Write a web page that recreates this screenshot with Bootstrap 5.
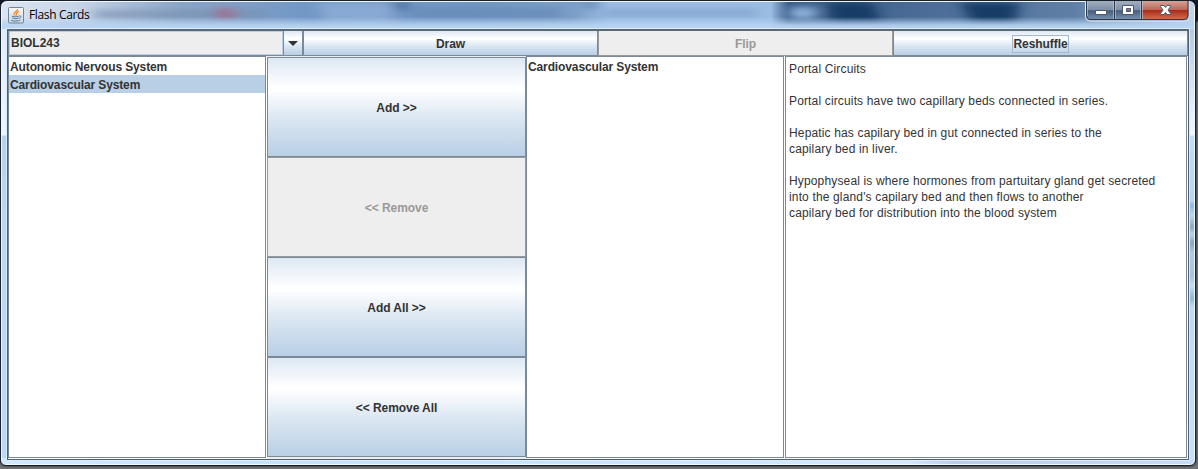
<!DOCTYPE html>
<html lang="en">
<head>
<meta charset="utf-8">
<meta name="viewport" content="width=device-width, initial-scale=1">
<title>Flash Cards</title>
<link href="https://cdn.jsdelivr.net/npm/bootstrap@5.3.0/dist/css/bootstrap.min.css" rel="stylesheet">
<style>
body{background:linear-gradient(#111b2b 0 20px,#707174 23px 100%);font:12px/16px "Liberation Sans",Arial,sans-serif;color:#333}
.desk{width:1198px;height:469px}
.frame{width:1196px;height:466px;border:1px solid #17202b;border-radius:7px 7px 6px 6px;padding:0 6px 6px;
 background:linear-gradient(90deg,#d1e8ff,#c5e2fb 25%,#cae4ff 50%,#d4e7ff 76%,#b9cde8 80%,#c9dcf7 100%) bottom/100% 7px no-repeat,
 linear-gradient(#dbe5f3,#e4edf9 50px,#eef4fc 134px,#b7d0ec 135px,#bfd6f4 250px,#bdd7fa) left/7px 100% no-repeat,
 linear-gradient(#a4b9d5,#bfd5ee 50px,#e6eefa 110px,#f3f7fc 134px,#c1dcfa 135px,#bad5f4 200px,#8eb6e3 204px,#bbd7f6 214px,#91a8c4 226px,#bad2ef 233px,#8fa4bd 242px,#b3c9e5 252px,#a9c4e3 275px,#c6dcfa 285px,#8eb7dc 297px,#bcd9fa 306px,#c8dffc) right/7px 100% no-repeat,#bdd7f5;
 box-shadow:inset 0 0 0 1px #f0f7ff,0 0 2px #000}
.glass{left:1px;top:1px;width:1192px;height:27px;border-radius:6px 6px 0 0}
.titlebar{height:28px;z-index:1}
.titletext{font:12px/16px "Open Sans","Noto Sans",sans-serif;color:#000;margin-left:5px;letter-spacing:-.35px}
.cap{position:absolute;right:-1px;top:0}
.client{height:431px;border:1px solid #52616f;border-top:2px solid #5c6975;background:#eee;box-shadow:0 0 0 1px #d9ebff}
.bar{height:25px;display:grid;grid-template-columns:295px 295px 295px 1fr}
.main-grid{height:403px;display:grid;grid-template-columns:259px 259px 259px 1fr}
.combo{border:1px solid #7a8a99;border-top:0;background:#eee}
.combo .val{flex:1;border:1px solid #b8cfe5;padding-left:1px;line-height:22px;font-weight:700}
.arrow{width:19px;border-left:1px solid #7a8a99}
.metal,.arrow{background:linear-gradient(#dde8f3 0,#fff 30%,#fff 32%,#dde8f3 60%,#b8cfe5 100%)}
.metal{border:1px solid #7a8a99;border-radius:0;padding:1px 0 0;font:700 12px/16px "Liberation Sans",Arial,sans-serif;letter-spacing:-.06px;color:#333;display:flex;align-items:center;justify-content:center}
.metal:hover{color:#333;border-color:#7a8a99}
.metal:disabled{background:#eee;color:#999;border-color:#999;opacity:1}
.bar .metal{border-top:0;padding-top:2px}
.focused{border:1px solid #a3b8cc;line-height:16px}
.pane{background:#fff;border:1px solid #7a8a99;box-shadow:1px 1px #fff;margin:0 1px 1px 0;overflow:hidden}
.pane .item{height:18px;line-height:21px;padding-left:1px;font-weight:700;letter-spacing:-.12px}
.pane .item + .item{line-height:20px}
.pane .picked{background:#b8cfe5}
.stack{padding:1px 0;display:grid;grid-template-rows:repeat(4,100px)}
.notes{white-space:pre;padding:4px 3px;letter-spacing:.15px}
</style>
</head>
<body class="m-0 overflow-hidden">
<div class="desk overflow-hidden">
<div class="frame position-relative">
<svg class="glass position-absolute" viewBox="0 0 1192 27" preserveAspectRatio="none" aria-hidden="true">
 <defs><filter id="soft" x="-10%" y="-60%" width="120%" height="220%"><feGaussianBlur stdDeviation="7 3"/></filter>
 <linearGradient id="sky"><stop stop-color="#dce5f1"/><stop offset=".07" stop-color="#c3d2e6"/><stop offset=".15" stop-color="#8ba5c8"/><stop offset=".25" stop-color="#7398c6"/><stop offset=".4" stop-color="#7097c3"/><stop offset=".48" stop-color="#7c9fc8"/><stop offset=".51" stop-color="#9bbde3"/><stop offset=".645" stop-color="#9bbde3"/><stop offset=".66" stop-color="#375b87"/><stop offset=".9" stop-color="#5f7fa6"/><stop offset="1" stop-color="#c4d5e8"/></linearGradient>
 <linearGradient id="fade" x2="0" y2="1"><stop offset=".55" stop-color="#b6d2f1" stop-opacity="0"/><stop offset=".85" stop-color="#b6d2f1" stop-opacity=".9"/><stop offset="1" stop-color="#bcd7f6"/></linearGradient></defs>
 <path fill="url(#sky)" d="M0 0H1192V27H0z"/>
 <g filter="url(#soft)"><path fill="#778fae" opacity=".65" d="M92 8H265V17H92z"/><path fill="#9d6f8d" d="M214 6h18v11h-18z"/><path fill="#88a9d3" d="M315 0H390V22H325z"/><path fill="#3f6596" d="M391 0h14v8h-10z"/><path fill="#6589b6" d="M410 6H560V17H410z" opacity=".7"/><path fill="#3f6596" d="M583 0h12l-6 8z"/><path fill="#7ea0ca" d="M602 7H755V15H602z" opacity=".7"/><path fill="#183d66" d="M826 0h45l8 22H830zM958 0h60l-5 22H970z"/><path fill="#8db1da" d="M788 5h26v12h-26z"/></g>
 <path fill="url(#fade)" d="M0 0H1192V27H0z"/>
</svg>
<header class="titlebar position-relative d-flex align-items-center">
 <svg width="17" height="17" viewBox="0 0 17 17"><defs><linearGradient id="ib" x2="0" y2="1"><stop stop-color="#faf7f4"/><stop offset="1" stop-color="#c5d8e5"/></linearGradient></defs><rect x="1.500" y=".5" width="15" height="15.500" rx="1" fill="url(#ib)" stroke="#71859a"/><g fill="none" stroke-linecap="round"><path d="M10.500 2.500C11 4 6 5 7.200 8M11.700 4.700C8.600 5.400 9.700 7 9 8.700" stroke="#e98728" stroke-width="1.200"/><path d="M5 9.300c1 .8 4.800.8 6.500 0M5.700 11.200c1.300.7 4.400.7 5.500 0M4.500 13.500c2 .9 6.500.9 8.500-.4M12.500 8.800c2.200-.2 1.800 2-.3 2.500" stroke="#587c9a"/></g></svg>
 <span class="titletext">Flash Cards</span>
 <svg class="cap" width="105" height="21" viewBox="0 0 105 21" aria-label="Window controls">
 <defs><linearGradient id="gb" x2="0" y2="1"><stop stop-color="#a1aebe"/><stop offset=".46" stop-color="#7b8ea7"/><stop offset=".48" stop-color="#455d7b"/><stop offset="1" stop-color="#819bb8"/></linearGradient><linearGradient id="rb" x2="0" y2="1"><stop stop-color="#d5a398"/><stop offset=".46" stop-color="#bd6757"/><stop offset=".48" stop-color="#a82a18"/><stop offset="1" stop-color="#d37452"/></linearGradient></defs>
 <path d="M1 0H104V15q0 5-5 5H6q-5 0-5-5z" fill="url(#gb)"/><path d="M57 0h46v15q0 4-4 4H57z" fill="url(#rb)"/>
 <path d="M.5 0v15q0 5 5 5H99q5 0 5-5V0" fill="none" stroke="#e0ebf5"/><path d="M1.500 0v14q0 4.500 4.500 4.500H98q5 0 5-4.500V0M29.500 0V19M56.500 0V19" fill="none" stroke="#30394a"/><path d="M2.500 0V15M28.500 0V18M30.500 0V18M55.500 0V18M57.500 0V18" fill="none" stroke="#c3cdda" opacity=".6"/>
 <path d="M10.500 9.500h11v4h-11z" fill="#fff" stroke="#535666"/>
 <path d="M37.500 4.500h11v9h-11zM41.500 7.500h4v3h-4z" fill="#fff" fill-rule="evenodd" stroke="#535666"/>
 <path d="M75.500 4.500h3.500l1.500 2 1.500-2h3.500v1l-2.500 3.500 2.500 3.500v1H82l-1.500-2-1.500 2h-3.500v-1L78 9l-2.500-3.500z" fill="#fff" stroke="#535666"/></svg>
</header>
<main class="client position-relative">
 <div class="bar">
  <div class="combo d-flex" role="combobox"><div class="val">BIOL243</div><div class="arrow d-flex align-items-center justify-content-center"><svg width="10" height="5" viewBox="0 0 10 5"><path d="M0 0h10L5 5z" fill="#333"/></svg></div></div>
  <button class="btn metal">Draw</button>
  <button class="btn metal" disabled>Flip</button>
  <button class="btn metal"><span class="focused">Reshuffle</span></button>
 </div>
 <div class="main-grid">
  <div class="pane"><div class="item">Autonomic Nervous System</div><div class="item picked">Cardiovascular System</div></div>
  <div class="stack">
   <button class="btn metal">Add &gt;&gt;</button>
   <button class="btn metal" disabled>&lt;&lt; Remove</button>
   <button class="btn metal">Add All &gt;&gt;</button>
   <button class="btn metal">&lt;&lt; Remove All</button>
  </div>
  <div class="pane"><div class="item">Cardiovascular System</div></div>
  <div class="pane notes">Portal Circuits

Portal circuits have two capillary beds connected in series.

Hepatic has capilary bed in gut connected in series to the
capilary bed in liver.

Hypophyseal is where hormones from partuitary gland get secreted
into the gland's capilary bed and then flows to another
capilary bed for distribution into the blood system</div>
 </div>
</main>
</div>
</div>
<script src="https://cdn.jsdelivr.net/npm/bootstrap@5.3.0/dist/js/bootstrap.bundle.min.js"></script>
</body>
</html>
